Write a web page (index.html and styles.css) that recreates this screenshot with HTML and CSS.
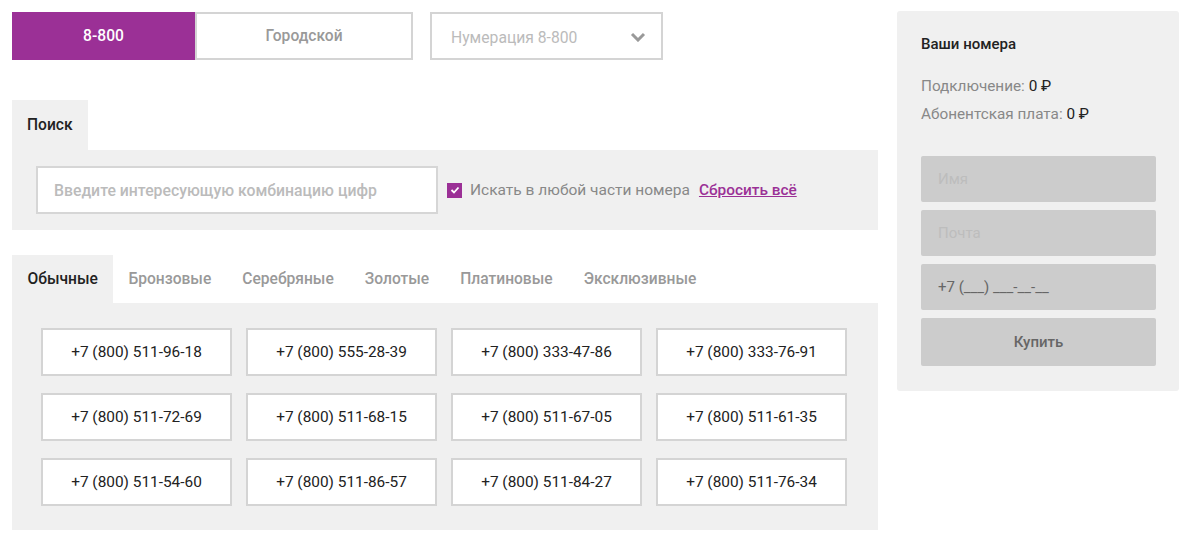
FILE: index.html
```html
<!DOCTYPE html>
<html lang="ru">
<head>
    <meta charset="UTF-8">
    <meta name="viewport" content="width=device-width, initial-scale=1.0">
    <title>Выбор номера</title>
    <link rel="stylesheet" href="styles.css">
</head>
<body>
    <div class="page">
        <div class="main">
            <div class="top-row">
                <div class="switch">
                    <button class="switch-btn active">8-800</button>
                    <button class="switch-btn">Городской</button>
                </div>
                <div class="select">
                    <span>Нумерация 8-800</span>
                    <svg width="16" height="10" viewBox="0 0 16 10"><path d="M2 2 L8 8 L14 2" fill="none" stroke="#999" stroke-width="3"/></svg>
                </div>
            </div>

            <div class="search">
                <div class="tabs">
                    <div class="tab active">Поиск</div>
                </div>
                <div class="search-panel">
                    <input class="search-input" type="text" placeholder="Введите интересующую комбинацию цифр">
                    <label class="check">
                        <span class="box"><svg width="10" height="8" viewBox="0 0 10 8"><path d="M1.5 4 L4 6.5 L8.5 1.5" fill="none" stroke="#fff" stroke-width="1.8"/></svg></span>
                        Искать в любой части номера
                    </label>
                    <a href="#" class="reset">Сбросить всё</a>
                </div>
            </div>

            <div class="numbers">
                <div class="tabs">
                    <div class="tab active">Обычные</div>
                    <div class="tab">Бронзовые</div>
                    <div class="tab">Серебряные</div>
                    <div class="tab">Золотые</div>
                    <div class="tab">Платиновые</div>
                    <div class="tab">Эксклюзивные</div>
                </div>
                <div class="numbers-panel">
                    <div class="num">+7 (800) 511-96-18</div>
                    <div class="num">+7 (800) 555-28-39</div>
                    <div class="num">+7 (800) 333-47-86</div>
                    <div class="num">+7 (800) 333-76-91</div>
                    <div class="num">+7 (800) 511-72-69</div>
                    <div class="num">+7 (800) 511-68-15</div>
                    <div class="num">+7 (800) 511-67-05</div>
                    <div class="num">+7 (800) 511-61-35</div>
                    <div class="num">+7 (800) 511-54-60</div>
                    <div class="num">+7 (800) 511-86-57</div>
                    <div class="num">+7 (800) 511-84-27</div>
                    <div class="num">+7 (800) 511-76-34</div>
                </div>
            </div>
        </div>

        <div class="sidebar">
            <div class="side-title">Ваши номера</div>
            <div class="side-line">Подключение: <b>0 ₽</b></div>
            <div class="side-line">Абонентская плата: <b>0 ₽</b></div>
            <form class="order">
                <input class="field" type="text" placeholder="Имя">
                <input class="field" type="text" placeholder="Почта">
                <input class="field phone" type="text" placeholder="+7 (___) ___-__-__">
                <button class="buy" type="button">Купить</button>
            </form>
        </div>
    </div>
</body>
</html>
```

FILE: styles.css
```css
body {
    margin: 0;
    font-family: Roboto, "Liberation Sans", sans-serif;
    color: #222;
    background: #fff;
}
.page {
    display: flex;
    gap: 19px;
    padding: 12px 0 0 12px;
}
.main {
    width: 866px;
}

/* верхняя строка */
.top-row {
    display: flex;
    gap: 17px;
}
.switch {
    display: flex;
}
.switch-btn {
    height: 48px;
    font-family: inherit;
    font-size: 15.6px;
    font-weight: 500;
    border: 2px solid #d4d4d4;
    background: #fff;
    color: #999;
    cursor: pointer;
    width: 218px;
}
.switch-btn.active {
    width: 183px;
    background: #9b3096;
    border-color: #9b3096;
    color: #fff;
}
.select {
    width: 233px;
    height: 48px;
    box-sizing: border-box;
    border: 2px solid #d4d4d4;
    display: flex;
    align-items: center;
    justify-content: space-between;
    padding: 2px 15px 0 19px;
    color: #bbb;
    font-size: 15.7px;
}

/* вкладки */
.tabs {
    display: flex;
}
.tab {
    height: 48px;
    line-height: 48px;
    padding: 0 16px;
    font-size: 15.6px;
    font-weight: 500;
    color: #999;
}
.tab.active {
    background: #f0f0f0;
    color: #222;
}

/* поиск */
.search {
    margin-top: 40px;
}
.search .tab {
    height: 50px;
    line-height: 50px;
    padding: 0 15px;
    width: 46px;
}
.search-panel {
    background: #f0f0f0;
    padding: 16px 24px;
    display: flex;
    align-items: center;
}
.search-input {
    width: 402px;
    height: 48px;
    box-sizing: border-box;
    border: 2px solid #d6d6d6;
    padding: 0 16px;
    font-family: inherit;
    font-size: 15.8px;
    font-weight: 500;
    outline: none;
}
.search-input::placeholder {
    color: #bbb;
}
.check {
    display: flex;
    align-items: center;
    gap: 8px;
    margin-left: 9px;
    font-size: 15.5px;
    color: #888;
}
.box {
    width: 15px;
    height: 15px;
    background: #9b3096;
    display: flex;
    align-items: center;
    justify-content: center;
}
.reset {
    margin-left: 9px;
    font-size: 15.4px;
    font-weight: 500;
    color: #9b3096;
}

/* номера */
.numbers {
    margin-top: 25px;
}
.numbers .tab {
    padding: 0 15.5px;
}
.numbers .tab.active {
    width: 70px;
}
.numbers-panel {
    background: #f0f0f0;
    padding: 25px 29px 24px;
    display: grid;
    grid-template-columns: repeat(4, 191px);
    column-gap: 14px;
    row-gap: 17px;
}
.num {
    height: 48px;
    box-sizing: border-box;
    background: #fff;
    border: 2px solid #d4d4d4;
    display: flex;
    align-items: center;
    justify-content: center;
    font-size: 15.4px;
    color: #222;
}

/* корзина */
.sidebar {
    width: 282px;
    box-sizing: border-box;
    margin-top: -1px;
    height: 380px;
    background: #f0f0f0;
    border-radius: 3px;
    padding: 24px 23px 0 24px;
}
.side-title {
    font-size: 15px;
    font-weight: 500;
    color: #222;
    margin-bottom: 24px;
}
.side-line {
    font-size: 15.3px;
    color: #888;
    margin-bottom: 10px;
    line-height: 18px;
}
.side-line b {
    font-weight: 400;
    color: #222;
}
.order {
    margin-top: 33px;
    display: flex;
    flex-direction: column;
    gap: 8px;
}
.field, .buy {
    height: 46px;
    box-sizing: border-box;
    border: none;
    border-radius: 2px;
    background: #ccc;
    font-family: inherit;
    font-size: 15px;
    padding: 0 17px;
    outline: none;
}
.field::placeholder {
    color: #bdbdbd;
}
.field.phone::placeholder {
    color: #666;
}
.buy {
    height: 48px;
    font-weight: 500;
    color: #666;
    cursor: pointer;
}
```
